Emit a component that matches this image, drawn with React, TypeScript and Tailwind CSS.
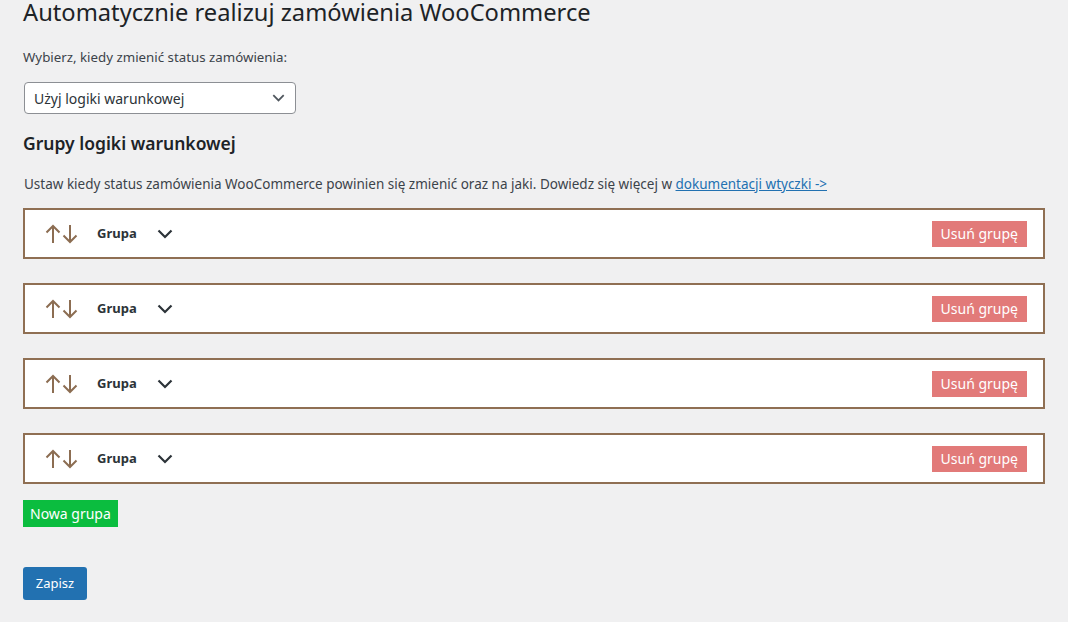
import React from 'react';

const FONT = '"Noto Sans", "Open Sans", sans-serif';

const SortArrows: React.FC = () => (
  <svg width="34" height="22" viewBox="0 0 34 22" fill="none" stroke="#8c6d52" strokeWidth="2" strokeLinecap="butt">
    {/* up */}
    <path d="M8 20 V3" />
    <path d="M1.5 9.5 L8 3 L14.5 9.5" />
    {/* down */}
    <path d="M25 2 V19" />
    <path d="M18.5 12.5 L25 19 L31.5 12.5" />
  </svg>
);

const Chevron: React.FC<{ className?: string }> = ({ className }) => (
  <svg width="16" height="10" viewBox="0 0 16 10" fill="none" stroke="currentColor" strokeWidth="2.2" className={className}>
    <path d="M1.5 1.5 L8 8 L14.5 1.5" />
  </svg>
);

const GroupRow: React.FC = () => (
  <div className="h-[51px] border-2 border-[#8f6f53] bg-white flex items-center pl-[20px] pr-[16px]">
    <SortArrows />
    <span className="ml-[18px] text-[13px] font-bold text-[#2c3338]">Grupa</span>
    <Chevron className="ml-[20px] text-[#2c3338]" />
    <button className="ml-auto h-[26px] px-[9px] bg-[#e27a79] text-white text-[14px] leading-none">
      Usuń grupę
    </button>
  </div>
);

const App: React.FC = () => {
  const groups = [1, 2, 3, 4];

  return (
    <div className="min-h-screen w-full bg-[#f0f0f1] text-[#3c434a]" style={{ fontFamily: FONT }}>
      <div className="pl-[23px] pr-[23px]">
        <h1 className="text-[23.7px] font-normal leading-[29px] text-[#1d2327] -mt-[2px]">
          Automatycznie realizuj zamówienia WooCommerce
        </h1>

        <p className="mt-[21px] text-[13.3px] leading-[18px] text-[#3c434a]">Wybierz, kiedy zmienić status zamówienia:</p>

        <div className="mt-[16px] ml-[1px] w-[272px] h-[32px] bg-white border border-[#8c8f94] rounded-[4px] flex items-center justify-between pl-[9px] pr-[10px] text-[14px] text-[#2c3338]">
          <span>Użyj logiki warunkowej</span>
          <Chevron className="text-[#50575e] w-[13px] h-[8px]" />
        </div>

        <h2 className="mt-[18px] text-[17.5px] font-semibold leading-[22px] text-[#1d2327]">Grupy logiki warunkowej</h2>

        <p className="mt-[21px] ml-[1px] text-[13.5px] leading-[18px] text-[#3c434a]">
          Ustaw kiedy status zamówienia WooCommerce powinien się zmienić oraz na jaki. Dowiedz się więcej w{' '}
          <a className="text-[#2271b1] underline" href="#">dokumentacji wtyczki -&gt;</a>
        </p>

        <div className="mt-[15px] w-[1022px] flex flex-col gap-[24px]">
          {groups.map(g => (
            <GroupRow key={g} />
          ))}
        </div>

        <button className="mt-[16px] h-[27px] px-[7px] bg-[#0bbd3f] text-white text-[14px] leading-none block">
          Nowa grupa
        </button>

        <button className="mt-[40px] h-[33px] w-[64px] rounded-[3px] bg-[#2271b1] text-white text-[13px] leading-none block">
          Zapisz
        </button>
      </div>
    </div>
  );
};

export default App;
